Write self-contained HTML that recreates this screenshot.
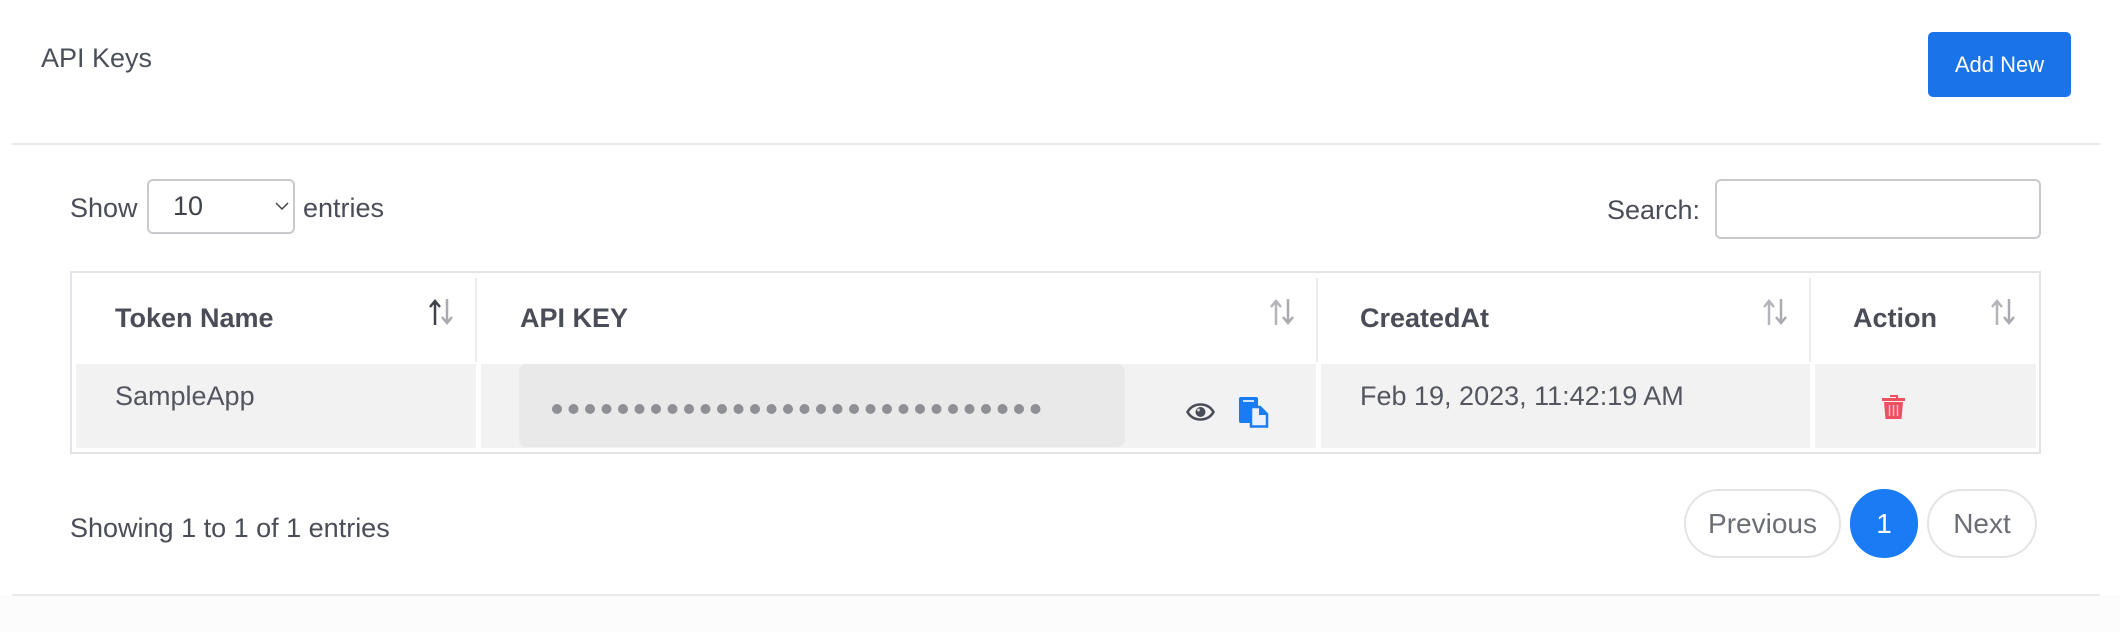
<!DOCTYPE html>
<html><head><meta charset="utf-8"><style>
*{box-sizing:border-box;margin:0;padding:0}
body{width:2120px;height:632px;background:#fcfcfc;font-family:"Liberation Sans",Arial,sans-serif;color:#4a4d57;position:relative;overflow:hidden}
.card{position:absolute;left:0;top:0;width:2120px;height:595px;background:#fff}
.a{position:absolute;white-space:nowrap}
.hl{position:absolute;left:12px;width:2088px;height:2px;background:#e8e9ec}
.btn{left:1928px;top:32px;width:143px;height:65px;background:#1a73e8;border-radius:5px;color:#fff;font-size:22px;line-height:65px;text-align:center}
.sel{left:147px;top:179px;width:148px;height:55px;border:2px solid #c8c9cc;border-radius:6px;font-size:27px;line-height:51px;padding-left:24px;color:#3f424a}
.inp{left:1715px;top:179px;width:326px;height:60px;border:2px solid #c8c9cc;border-radius:6px}
.tbl{left:70px;top:271px;width:1971px;height:183px;border:2px solid #e1e3e6}
.cell{position:absolute;top:364px;height:84px;background:#f2f2f2}
.vd{position:absolute;top:278px;width:2px;height:84px;background:#ececec}
.th{font-weight:bold;font-size:27px;color:#4a4d57;top:303px}
.td{font-size:27px;color:#53565f;top:381px}
.sort{position:absolute;top:299px}
.pg{top:489px;height:69px;border:2px solid #e3e4e6;border-radius:35px;font-size:28px;color:#6b6e75;text-align:center;line-height:65px}
</style></head><body>
<div class="card"></div>
<div class="a" style="left:41px;top:43px;font-size:27px;color:#4a4f5a">API Keys</div>
<div class="a btn">Add New</div>
<div class="hl" style="top:143px"></div>
<div class="a" style="left:70px;top:193px;font-size:27px">Show</div>
<div class="a sel">10<svg style="position:absolute;left:125px;top:20px" width="16" height="10" viewBox="0 0 16 10"><path d="M2 2l6 6 6-6" fill="none" stroke="#444" stroke-width="1.5"/></svg></div>
<div class="a" style="left:303px;top:193px;font-size:27px">entries</div>
<div class="a" style="left:1607px;top:195px;font-size:27px">Search:</div>
<div class="a inp"></div>
<div class="a tbl"></div>
<div class="vd" style="left:475px"></div><div class="vd" style="left:1316px"></div><div class="vd" style="left:1809px"></div>
<div class="cell" style="left:76px;width:400px"></div>
<div class="cell" style="left:481px;width:835px"></div>
<div class="cell" style="left:1321px;width:489px"></div>
<div class="cell" style="left:1815px;width:221px"></div>
<div class="a" style="left:519px;top:364px;width:606px;height:83px;background:#e9e9e9;border-radius:8px"></div>
<div class="a th" style="left:115px">Token Name</div>
<div class="a th" style="left:520px">API KEY</div>
<div class="a th" style="left:1360px">CreatedAt</div>
<div class="a th" style="left:1853px">Action</div>
<svg class="sort" style="left:429px" width="24" height="26" viewBox="0 0 24 26"><path d="M6 26V3M1 8l5-6 5 6" fill="none" stroke="#3f424a" stroke-width="2.5"/><path d="M18 0v23M13 18l5 6 5-6" fill="none" stroke="#a9abb0" stroke-width="2.5"/></svg>
<svg class="sort" style="left:1270px" width="24" height="26" viewBox="0 0 24 26"><path d="M6 26V3M1 8l5-6 5 6" fill="none" stroke="#b3b5ba" stroke-width="2.5"/><path d="M18 0v23M13 18l5 6 5-6" fill="none" stroke="#a9abb0" stroke-width="2.5"/></svg>
<svg class="sort" style="left:1763px" width="24" height="26" viewBox="0 0 24 26"><path d="M6 26V3M1 8l5-6 5 6" fill="none" stroke="#b3b5ba" stroke-width="2.5"/><path d="M18 0v23M13 18l5 6 5-6" fill="none" stroke="#a9abb0" stroke-width="2.5"/></svg>
<svg class="sort" style="left:1991px" width="24" height="26" viewBox="0 0 24 26"><path d="M6 26V3M1 8l5-6 5 6" fill="none" stroke="#b3b5ba" stroke-width="2.5"/><path d="M18 0v23M13 18l5 6 5-6" fill="none" stroke="#a9abb0" stroke-width="2.5"/></svg>
<div class="a td" style="left:115px">SampleApp</div>
<svg class="a" style="left:550px;top:402px" width="495" height="14"><g fill="#8e9095">
<circle cx="7" cy="7" r="5"/><circle cx="23.5" cy="7" r="5"/><circle cx="40" cy="7" r="5"/><circle cx="56.5" cy="7" r="5"/><circle cx="73" cy="7" r="5"/><circle cx="89.5" cy="7" r="5"/><circle cx="106" cy="7" r="5"/><circle cx="122.5" cy="7" r="5"/><circle cx="139" cy="7" r="5"/><circle cx="155.5" cy="7" r="5"/><circle cx="172" cy="7" r="5"/><circle cx="188.5" cy="7" r="5"/><circle cx="205" cy="7" r="5"/><circle cx="221.5" cy="7" r="5"/><circle cx="238" cy="7" r="5"/><circle cx="254.5" cy="7" r="5"/><circle cx="271" cy="7" r="5"/><circle cx="287.5" cy="7" r="5"/><circle cx="304" cy="7" r="5"/><circle cx="320.5" cy="7" r="5"/><circle cx="337" cy="7" r="5"/><circle cx="353.5" cy="7" r="5"/><circle cx="370" cy="7" r="5"/><circle cx="386.5" cy="7" r="5"/><circle cx="403" cy="7" r="5"/><circle cx="419.5" cy="7" r="5"/><circle cx="436" cy="7" r="5"/><circle cx="452.5" cy="7" r="5"/><circle cx="469" cy="7" r="5"/><circle cx="485.5" cy="7" r="5"/></g></svg>
<svg class="a" style="left:1186px;top:403px" width="29" height="18" viewBox="0 0 29 18"><path d="M1.5 9C5 3 9.5 1.5 14.5 1.5S24 3 27.5 9C24 15 19.5 16.5 14.5 16.5S5 15 1.5 9Z" fill="none" stroke="#4a4d57" stroke-width="2.6"/><circle cx="14.5" cy="9" r="5" fill="#4a4d57"/><circle cx="12.5" cy="7" r="1.5" fill="#ccc"/></svg>
<svg class="a" style="left:1239px;top:397px" width="31" height="31" viewBox="0 0 31 31"><rect x="0" y="0" width="19" height="26" rx="2" fill="#1a7cf5"/><rect x="4" y="3" width="11" height="2" fill="#cfe2fd"/><path d="M12 10h9l7 7v12.5H12Z" fill="#e9f1fd" stroke="#1a7cf5" stroke-width="2.5"/><path d="M20 10v8h8" fill="#1a7cf5"/></svg>
<div class="a td" style="left:1360px">Feb 19, 2023, 11:42:19 AM</div>
<svg class="a" style="left:1882px;top:395px" width="23" height="25" viewBox="0 0 23 25"><path d="M8 1h7v3" fill="none" stroke="#ef5060" stroke-width="2"/><rect x="0" y="3" width="23" height="3" fill="#ef5060"/><path d="M2 7h19l-1.5 17h-16Z" fill="#ef5060"/><path d="M7.5 10v11M11.5 10v11M15.5 10v11" stroke="#fbd" stroke-width="1.4"/></svg>
<div class="a" style="left:70px;top:513px;font-size:27px">Showing 1 to 1 of 1 entries</div>
<div class="a pg" style="left:1684px;width:157px">Previous</div>
<div class="a pg" style="left:1850px;width:68px;background:#1a7cf5;border-color:#1a7cf5;color:#fff">1</div>
<div class="a pg" style="left:1927px;width:110px">Next</div>
<div class="hl" style="top:594px"></div>
</body></html>
